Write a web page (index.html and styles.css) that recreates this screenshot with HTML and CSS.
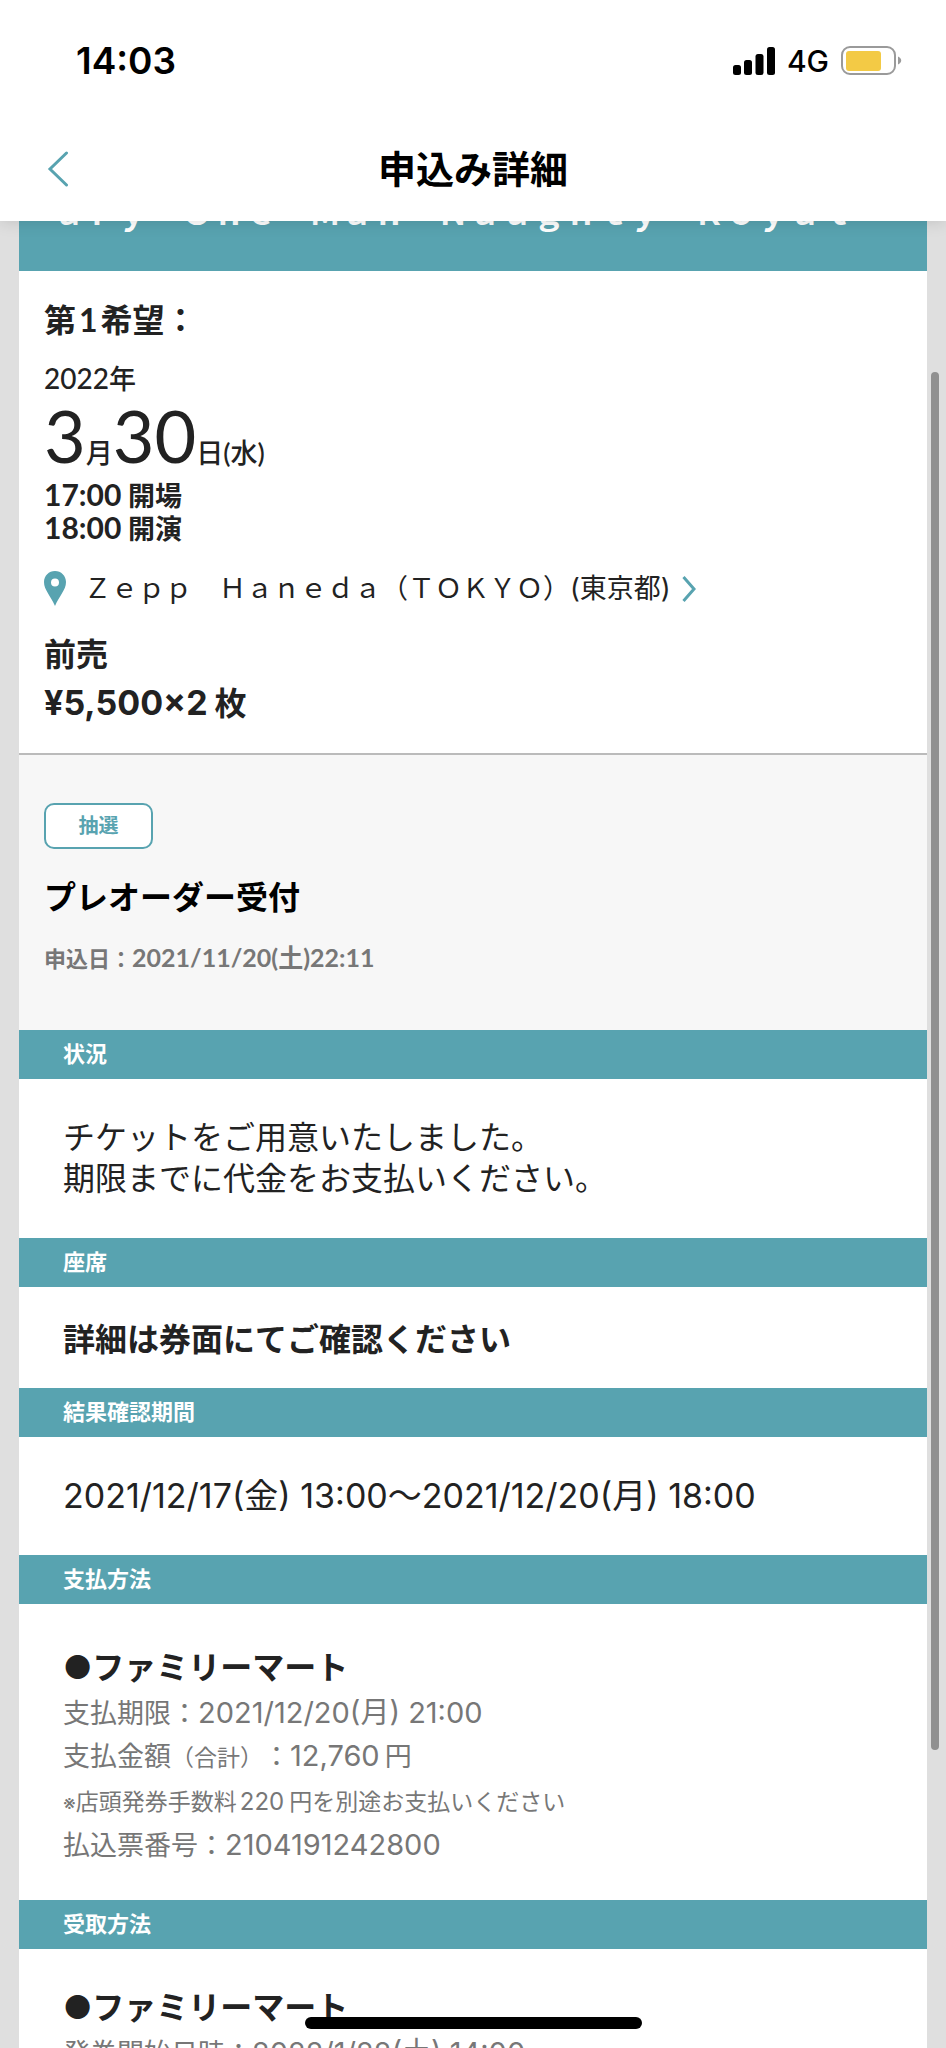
FILE: index.html
```
<!DOCTYPE html>
<html lang="ja">
<head>
  <meta charset="UTF-8">
  <meta name="viewport" content="width=device-width, initial-scale=1">
  <title>申込み詳細</title>
  <link rel="stylesheet" href="styles.css">
</head>
<body>
  <header class="header">
    <div class="status-bar">
      <span class="clock">14:03</span>
      <div class="status-icons">
        <svg class="signal" width="42" height="28" viewBox="0 0 42 28">
          <rect x="0" y="18" width="8" height="10" rx="2.5"/>
          <rect x="11" y="13" width="8" height="15" rx="2.5"/>
          <rect x="22.500" y="7" width="8" height="21" rx="2.5"/>
          <rect x="34" y="0" width="8" height="28" rx="2.5"/>
        </svg>
        <span class="network">4G</span>
        <svg class="battery" width="61" height="30" viewBox="0 0 61 30">
          <rect x="1" y="1" width="53" height="27" rx="8" fill="#fff" stroke="#9a9a9a" stroke-width="2"/>
          <rect x="5" y="5" width="35" height="20" rx="3" fill="#f3ca45"/>
          <path d="M57 10.500c2 .8 3.200 2.300 3.200 4s-1.200 3.200-3.200 4z" fill="#9a9a9a"/>
        </svg>
      </div>
    </div>
    <nav class="nav">
      <a href="#" class="back" aria-label="戻る">
        <svg width="22" height="36" viewBox="0 0 22 36"><path d="M19.500 2L3 18l16.500 16" fill="none" stroke="#58a3b0" stroke-width="3" stroke-linecap="round"/></svg>
      </a>
      <h1>申込み詳細</h1>
    </nav>
  </header>

  <main class="card">
    <div class="event-title"><span>ａｒｙ　Ｏｎｅ　Ｍａｎ　Ｎａｕｇｈｔｙ　Ｒｏｙａｌ</span></div>

    <section class="event">
      <h2 class="choice">第<span class="num">1</span>希望：</h2>
      <p class="year"><span class="num">2022</span>年</p>
      <p class="date"><span class="big">3</span>月<span class="big">30</span>日(水)</p>
      <p class="time"><span class="num">17:00</span> 開場</p>
      <p class="time"><span class="num">18:00</span> 開演</p>
      <a href="#" class="venue">
        <svg width="22" height="36" viewBox="0 0 22 36"><path fill="#58a3b0" fill-rule="evenodd" d="M11 0C4.900 0 0 4.900 0 11c0 8 6.500 13.500 11 24 4.500-10.500 11-16 11-24C22 4.900 17.100 0 11 0zm0 7.500a4 4 0 1 1 0 8 4 4 0 0 1 0-8z"/></svg>
        <span>Ｚｅｐｐ　Ｈａｎｅｄａ（ＴＯＫＹＯ）(東京都)</span>
        <svg class="arrow" width="14" height="28" viewBox="0 0 14 28"><path d="M1.500 2L12 14 1.500 26" fill="none" stroke="#58a3b0" stroke-width="3"/></svg>
      </a>
      <h3 class="ticket">前売</h3>
      <p class="price"><span class="num">¥5,500×2</span>枚</p>
    </section>

    <section class="reception">
      <span class="badge">抽選</span>
      <h2>プレオーダー受付</h2>
      <p>申込日：<span class="num">2021/11/20(土)22:11</span></p>
    </section>

    <h3 class="bar">状況</h3>
    <div class="status">
      <p>チケットをご用意いたしました。</p>
      <p>期限までに代金をお支払いください。</p>
    </div>

    <h3 class="bar">座席</h3>
    <div class="seat">
      <p>詳細は券面にてご確認ください</p>
    </div>

    <h3 class="bar">結果確認期間</h3>
    <div class="period">
      <p>2021/12/17(金) 13:00〜2021/12/20(月) 18:00</p>
    </div>

    <h3 class="bar">支払方法</h3>
    <div class="method">
      <h4>●ファミリーマート</h4>
      <p>支払期限：<span class="num">2021/12/20(月) 21:00</span></p>
      <p>支払金額<small>（合計）</small>：<span class="num amount">12,760</span>円</p>
      <p class="note"><span class="mark">※</span>店頭発券手数料<span class="num amount">220</span>円を別途お支払いください</p>
      <p>払込票番号：<span class="num">2104191242800</span></p>
    </div>

    <h3 class="bar">受取方法</h3>
    <div class="method pickup">
      <h4>●ファミリーマート</h4>
      <p>発券開始日時：<span class="num">2022/1/22(土) 14:00</span></p>
    </div>
  </main>

  <div class="scrollbar"></div>
  <div class="home-indicator"></div>
</body>
</html>
```

FILE: styles.css
```
* {
  box-sizing: border-box;
}
body {
  display: flex;
  flex-direction: column;
  height: 100vh;
  margin: 0;
  overflow: hidden;
  background-color: #dfdfdf;
  color: #222;
  font-family: Inter, "Noto Sans CJK JP", sans-serif;
  text-spacing-trim: space-all;
}
h1, h2, h3, h4, p {
  margin: 0;
}
a {
  color: inherit;
  text-decoration: none;
}
.num {
  line-height: 1;
}

/* ヘッダー */
.header {
  position: relative;
  z-index: 1;
  flex: none;
  padding-bottom: 17px;
  background-color: #fff;
  color: #000;
  box-shadow: 0 0 16px rgba(0, 0, 0, 0.15);
}
.status-bar {
  display: flex;
  justify-content: space-between;
  align-items: center;
  height: 121px;
  padding: 0 44px 0 76px;
}
.clock {
  font-size: 37px;
  font-weight: 600;
}
.status-icons {
  display: flex;
  align-items: center;
}
.network {
  margin: 0 12px;
  font-size: 30px;
  font-weight: 500;
}
.nav {
  display: grid;
  grid-template-columns: 1fr auto 1fr;
  align-items: center;
  height: 83px;
  padding: 12px 47px 0;
}
.back svg {
  display: block;
}
.nav h1 {
  font-size: 38px;
  line-height: 48px;
}

/* 本文 */
.card {
  flex: 1;
  min-height: 0;
  margin: 0 19px;
  overflow: hidden;
  background-color: #fff;
}
.event-title {
  display: flex;
  align-items: flex-end;
  height: 50px;
  padding: 0 34px 33px;
  overflow: hidden;
  background-color: #58a3b0;
  color: #fff;
  font-size: 32px;
  font-weight: bold;
  line-height: 48px;
  white-space: nowrap;
}
.event {
  padding: 25px 25px 24px;
  border-bottom: 2px solid #bbb;
}
.choice {
  margin-bottom: 19px;
  font-family: Lato, "Noto Sans CJK JP", sans-serif;
  font-size: 32px;
  line-height: 48px;
}
.choice .num {
  margin: 0 3px;
}
.year,
.date,
.time {
  font-family: Lato, "Noto Sans CJK JP", sans-serif;
  font-size: 27px;
  font-weight: 500;
  line-height: 32px;
}
.year .num {
  font-size: 28px;
}
.date {
  margin-bottom: 4px;
}
.date .big {
  font-size: 72px;
  font-weight: 400;
  line-height: 80px;
}
.time {
  font-weight: bold;
}
.time .num {
  font-size: 30px;
}
.venue {
  display: flex;
  align-items: center;
  margin: 24px 0 22px;
  font-size: 27px;
  line-height: 40px;
}
.venue span {
  margin-left: 18px;
}
.venue .arrow {
  margin-left: 11px;
}
.ticket {
  font-size: 32px;
  line-height: 48px;
}
.price {
  font-size: 32px;
  font-weight: bold;
  line-height: 50px;
}
.price .num {
  margin-right: 7px;
  font-size: 34px;
}
.reception {
  height: 275px;
  padding: 48px 25px;
  background-color: #f7f7f7;
}
.badge {
  display: block;
  width: 109px;
  border: 2px solid #58a3b0;
  border-radius: 10px;
  background-color: #fff;
  color: #58a3b0;
  font-size: 20px;
  font-weight: bold;
  line-height: 42px;
  text-align: center;
}
.reception h2 {
  margin: 25px 0 17px;
  color: #000;
  font-size: 32px;
  line-height: 48px;
}
.reception p {
  color: #777;
  font-family: Lato, "Noto Sans CJK JP", sans-serif;
  font-size: 22px;
  font-weight: bold;
  line-height: 40px;
}
.reception .num {
  font-size: 25px;
}

.bar {
  padding: 0 44px;
  background-color: #58a3b0;
  color: #fff;
  font-size: 22px;
  line-height: 49px;
}
.status,
.seat,
.period,
.method {
  padding: 38px 44px 39px;
  font-size: 32px;
  line-height: 41px;
}
.seat {
  padding: 32px 44px 28px;
  font-weight: bold;
}
.period {
  font-size: 34px;
}
.method {
  padding: 40px 44px 33px;
}
.method h4 {
  font-size: 32px;
  line-height: 48px;
}
.method p {
  color: #777;
  font-size: 27px;
  line-height: 43px;
}
.method .num {
  font-size: 29px;
}
.method .amount {
  margin-right: 5px;
}
.method small {
  font-size: 23px;
  line-height: 1;
}
.method .note {
  margin-top: 3px;
  font-size: 23px;
}
.note .num {
  margin-left: 3px;
  font-size: 24px;
}
.method .mark {
  font-size: 20px;
  line-height: 1;
}
.method.pickup {
  padding-top: 35px;
}

.scrollbar {
  position: absolute;
  z-index: 1;
  top: 372px;
  right: 7px;
  width: 8px;
  height: 1378px;
  border-radius: 4px;
  background-color: #909090;
}
.home-indicator {
  position: absolute;
  z-index: 1;
  bottom: 19px;
  left: 50%;
  width: 337px;
  height: 12px;
  margin-left: -168px;
  border-radius: 6px;
  background-color: #000;
}
```
